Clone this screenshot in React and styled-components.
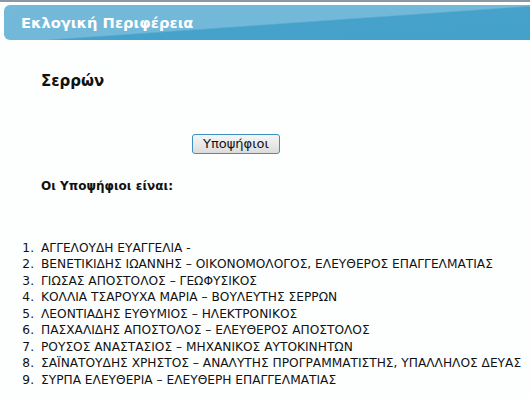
import React from "react";
import styled, { createGlobalStyle } from "styled-components";

const Global = createGlobalStyle`
  html, body { margin: 0; padding: 0; background: #fdfefe; }
  body { font-family: "DejaVu Sans", Verdana, sans-serif; color: #111; }
`;

const Page = styled.div`
  width: 530px;
  height: 399px;
  overflow: hidden;
  display: flex;
  flex-direction: column;
`;

const TopStrip = styled.div`
  height: 2px;
  background: #8a98a4;
  margin-bottom: 3px;
`;

const Header = styled.div`
  height: 35px;
  margin-left: 4px;
  border-radius: 6px 0 0 6px;
  background: linear-gradient(176deg, #74b9d9 0%, #72b8d8 52%, #46a2cb 54%, #43a0c9 100%);
  display: flex;
  align-items: center;
  padding-left: 17px;
  color: #fff;
  font-weight: bold;
  font-size: 14.7px;
`;

const Content = styled.div`
  padding: 0 0 0 41px;
  display: flex;
  flex-direction: column;
`;

const Region = styled.h2`
  margin: 32px 0 0 0;
  font-size: 15px;
  font-weight: bold;
  line-height: 18px;
`;

const ButtonRow = styled.div`
  margin-top: 43px;
  padding-left: 151px;
`;

const Button = styled.button`
  font-family: "DejaVu Sans", Verdana, sans-serif;
  font-size: 13px;
  height: 20px;
  width: 88px;
  padding: 0;
  border: 1px solid #3d8fc0;
  border-radius: 3px;
  background: linear-gradient(#f6f6f6, #dcdcdc);
  color: #111;
`;

const Subtitle = styled.div`
  margin-top: 25px;
  font-size: 12px;
  font-weight: bold;
`;

const List = styled.ol`
  margin: 47px 0 0 -41px;
  padding: 0;
  list-style: none;
  font-size: 12.2px;
  line-height: 16.5px;
  white-space: nowrap;
`;

const Item = styled.li`
  display: flex;
`;

const Num = styled.span`
  width: 34px;
  flex: none;
  text-align: right;
  padding-right: 7px;
`;

const items = [
  "ΑΓΓΕΛΟΥΔΗ ΕΥΑΓΓΕΛΙΑ -",
  "ΒΕΝΕΤΙΚΙΔΗΣ ΙΩΑΝΝΗΣ – ΟΙΚΟΝΟΜΟΛΟΓΟΣ, ΕΛΕΥΘΕΡΟΣ ΕΠΑΓΓΕΛΜΑΤΙΑΣ",
  "ΓΙΩΣΑΣ ΑΠΟΣΤΟΛΟΣ – ΓΕΩΦΥΣΙΚΟΣ",
  "ΚΟΛΛΙΑ ΤΣΑΡΟΥΧΑ ΜΑΡΙΑ – ΒΟΥΛΕΥΤΗΣ ΣΕΡΡΩΝ",
  "ΛΕΟΝΤΙΑΔΗΣ ΕΥΘΥΜΙΟΣ – ΗΛΕΚΤΡΟΝΙΚΟΣ",
  "ΠΑΣΧΑΛΙΔΗΣ ΑΠΟΣΤΟΛΟΣ – ΕΛΕΥΘΕΡΟΣ ΑΠΟΣΤΟΛΟΣ",
  "ΡΟΥΣΟΣ ΑΝΑΣΤΑΣΙΟΣ – ΜΗΧΑΝΙΚΟΣ ΑΥΤΟΚΙΝΗΤΩΝ",
  "ΣΑΪΝΑΤΟΥΔΗΣ ΧΡΗΣΤΟΣ – ΑΝΑΛΥΤΗΣ ΠΡΟΓΡΑΜΜΑΤΙΣΤΗΣ, ΥΠΑΛΛΗΛΟΣ ΔΕΥΑΣ",
  "ΣΥΡΠΑ ΕΛΕΥΘΕΡΙΑ – ΕΛΕΥΘΕΡΗ ΕΠΑΓΓΕΛΜΑΤΙΑΣ",
];

export default function App() {
  return (
    <Page>
      <Global />
      <TopStrip />
      <Header>Εκλογική Περιφέρεια</Header>
      <Content>
        <Region>Σερρών</Region>
        <ButtonRow>
          <Button>Υποψήφιοι</Button>
        </ButtonRow>
        <Subtitle>Οι Υποψήφιοι είναι:</Subtitle>
        <List>
          {items.map((t, i) => (
            <Item key={i}>
              <Num>{i + 1}.</Num>
              <span>{t}</span>
            </Item>
          ))}
        </List>
      </Content>
    </Page>
  );
}
